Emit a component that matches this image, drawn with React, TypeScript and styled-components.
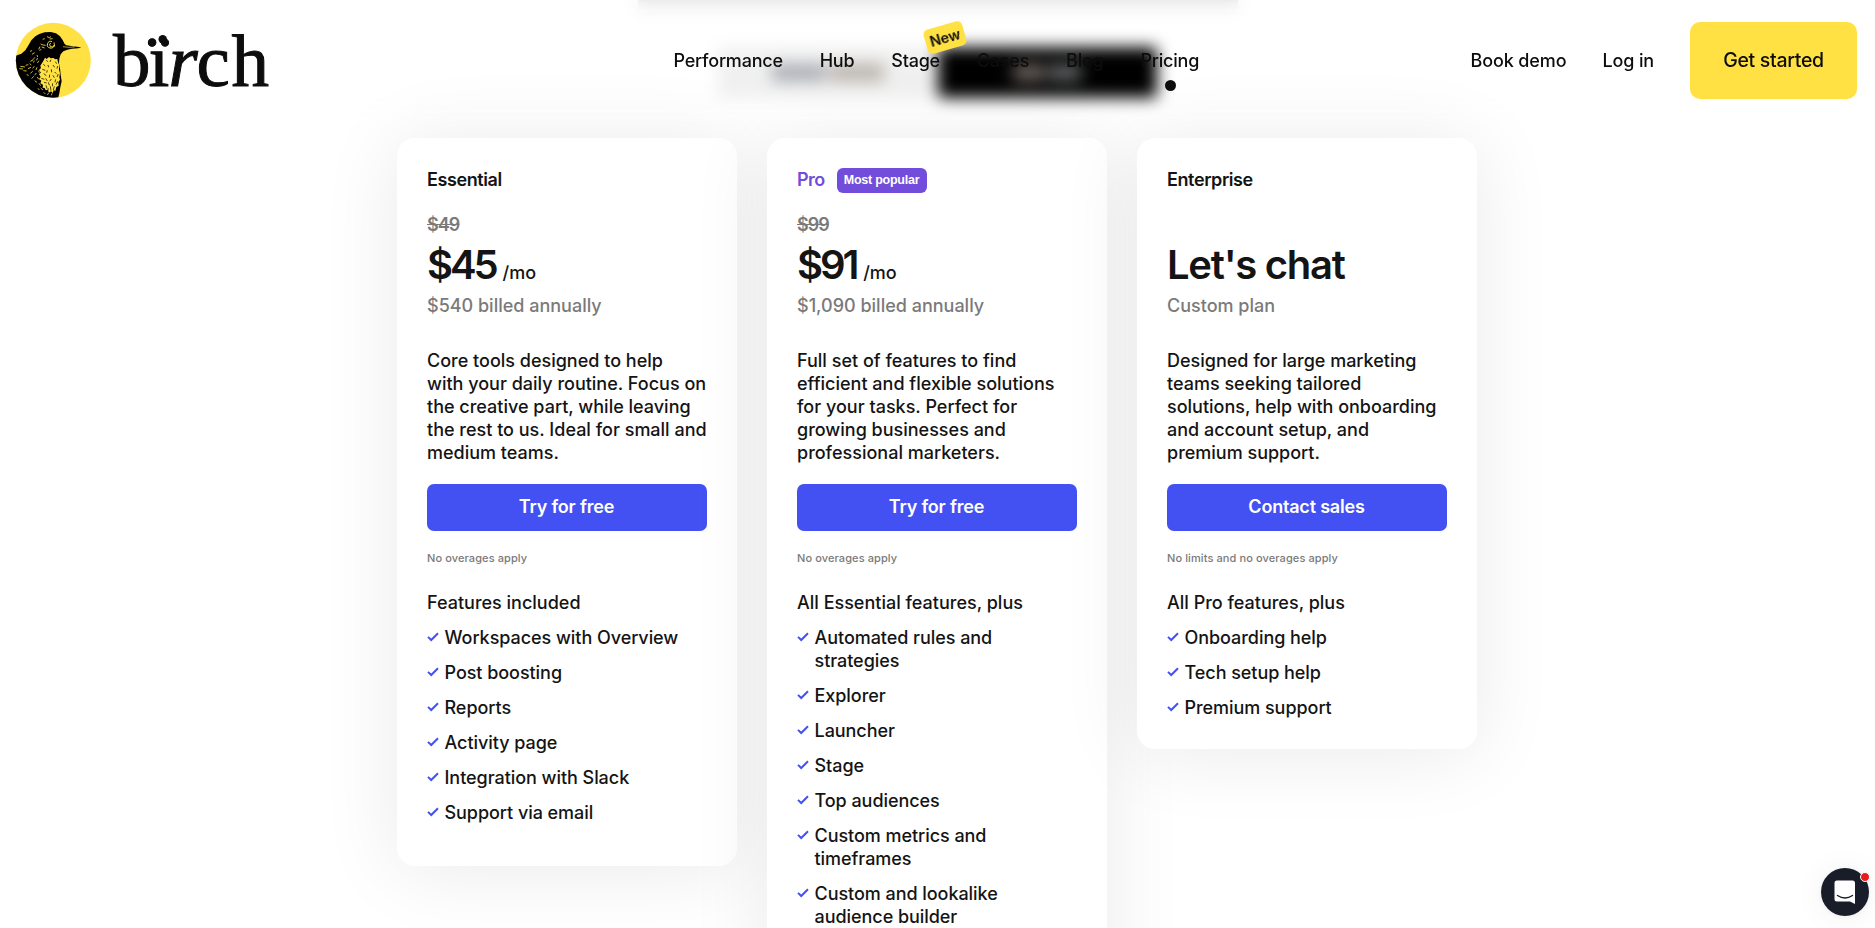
import React from 'react';
import styled, { createGlobalStyle } from 'styled-components';

const INK = '#141414';
const YELLOW = '#ffe144';
const BLUE = '#4451f2';
const PURPLE = '#724ddb';

const GlobalStyle = createGlobalStyle`
  * { box-sizing: border-box; }
  html, body { margin: 0; padding: 0; }
  body {
    height: 928px;
    overflow: hidden;
    background: #fff;
    color: ${INK};
    font: 500 18px/23px Inter, 'Liberation Sans', sans-serif;
  }
  ul { margin: 0; padding: 0; list-style: none; }
  h2, h3, p { margin: 0; font: inherit; }
  a { color: inherit; text-decoration: none; }
  button { border: 0; font: inherit; cursor: pointer; }
`;

/* Header */

const Header = styled.header`
  position: fixed;
  inset: 0 0 auto;
  z-index: 10;
  height: 121px;
  padding: 0 18px 0 16px;
  display: grid;
  grid-template-columns: 657.5px 1fr auto;
  align-items: center;
  color: #0d0d0d;
  backdrop-filter: blur(8px);
`;

const LogoLink = styled.a`
  display: block;
  height: 121px;
`;

const Nav = styled.nav`
  display: flex;
  align-items: center;
  gap: 36.9px;
  letter-spacing: -0.22px;
`;

const NavItem = styled.a<{ $active?: boolean }>`
  position: relative;
  ${({ $active }) =>
    $active &&
    `&::after {
      content: '';
      position: absolute;
      top: 31px;
      left: 50%;
      width: 11px;
      height: 11px;
      margin-left: -5px;
      border-radius: 50%;
      background: #0d0d0d;
    }`}
`;

const NewBadge = styled.span`
  position: absolute;
  left: 34px;
  top: -24px;
  width: 40px;
  height: 25px;
  border-radius: 5px;
  background: ${YELLOW};
  font-size: 14.5px;
  font-weight: 600;
  line-height: 25px;
  text-align: center;
  transform: rotate(-16deg);
`;

const Account = styled.div`
  display: flex;
  align-items: center;
  gap: 36px;
  letter-spacing: -0.13px;
`;

const GetStarted = styled.button`
  width: 167px;
  height: 77px;
  padding: 0 0 1px;
  border-radius: 10px;
  background: ${YELLOW};
  color: #0d0d0d;
  font-size: 19.5px;
  letter-spacing: -0.3px;
`;

/* Billing period switch, scrolled under the header */

const Intro = styled.section`
  height: 138px;
  display: flex;
  flex-direction: column;
  align-items: center;
`;

const IntroLine = styled.div`
  width: 600px;
  height: 14px;
  margin-bottom: 33px;
  background: linear-gradient(#e6e6e6, #fff);
`;

const Switch = styled.div`
  display: flex;
  width: 439px;
  height: 51px;
  background: #f0f0f0;
`;

const SwitchOption = styled.div<{ $selected?: boolean }>`
  flex: 1;
  display: flex;
  align-items: center;
  justify-content: center;
  gap: 4px;
  border-radius: 4px;
  background: ${({ $selected }) => ($selected ? '#000' : 'transparent')};
`;

const SwitchBar = styled.i<{ $w: number; $c: string }>`
  width: ${({ $w }) => $w}px;
  height: 17px;
  background: ${({ $c }) => $c};
`;

/* Plans */

const Plans = styled.main`
  display: flex;
  align-items: flex-start;
  gap: 30px;
  width: 1080px;
  margin-left: 397px;
`;

const Card = styled.article<{ $minHeight?: number }>`
  width: 340px;
  min-height: ${({ $minHeight }) => $minHeight ?? 0}px;
  padding: 30px;
  border-radius: 18px;
  background: #fff;
  box-shadow: 0 4px 80px rgba(0, 0, 0, 0.085);
`;

const CardHead = styled.div`
  display: flex;
  align-items: center;
  gap: 12px;
  height: 25px;
`;

const PlanName = styled.h2<{ $accent?: boolean }>`
  padding-bottom: 2px;
  font-weight: 600;
  letter-spacing: ${({ $accent }) => ($accent ? -0.6 : -0.4)}px;
  color: ${({ $accent }) => ($accent ? PURPLE : INK)};
`;

const Popular = styled.span`
  width: 90px;
  height: 25px;
  border-radius: 6px;
  background: ${PURPLE};
  color: #fff;
  font: 700 12.5px/24px 'Liberation Sans', Arial, sans-serif;
  letter-spacing: -0.25px;
  text-align: center;
`;

const OldPrice = styled.p`
  height: 23px;
  margin-top: 20px;
  color: #7a7a7a;
  font-weight: 600;
  letter-spacing: -0.95px;
  text-decoration: line-through;
`;

const Price = styled.p`
  display: flex;
  align-items: baseline;
  height: 48px;
  margin-top: 5px;
  line-height: 48px;
`;

const Amount = styled.span<{ $tight?: boolean }>`
  font-size: 40px;
  font-weight: 600;
  letter-spacing: ${({ $tight }) => ($tight ? -3.1 : -1.25)}px;
`;

const Period = styled.span`
  margin-left: 7px;
`;

const Billing = styled.p`
  margin-top: 5px;
  color: #7a7a7a;
`;

const Description = styled.p`
  height: 115px;
  margin-top: 32px;
  white-space: pre-line;
`;

const Cta = styled.button`
  display: block;
  width: 280px;
  height: 47px;
  margin-top: 20px;
  padding: 0 1px 2px 0;
  border-radius: 7px;
  background: ${BLUE};
  color: #fff;
  font-weight: 600;
  letter-spacing: -0.2px;
`;

const Note = styled.p`
  margin-top: 19px;
  color: #7a7a7a;
  font-size: 11px;
  line-height: 16px;
  letter-spacing: 0.1px;
`;

const FeatureTitle = styled.h3`
  margin-top: 25px;
`;

const Features = styled.ul`
  display: grid;
  gap: 12px;
  margin-top: 12px;
`;

const Feature = styled.li`
  display: grid;
  grid-template-columns: 12px 1fr;
  column-gap: 5.5px;
  letter-spacing: -0.05px;
  white-space: pre-line;
`;

const CheckMark = styled.svg`
  display: block;
  margin-top: 5px;
`;

const Check = () => (
  <CheckMark width="12" height="12" viewBox="0 0 12 12" fill="none">
    <path d="M1 5.900 4.200 9 11 2.300" stroke={BLUE} strokeWidth="2" />
  </CheckMark>
);

/* Chat launcher */

const Chat = styled.button`
  position: fixed;
  right: 6px;
  bottom: 12px;
  z-index: 20;
  display: grid;
  place-items: center;
  width: 48px;
  height: 48px;
  padding: 0;
  border-radius: 50%;
  background: #181d29;
  box-shadow: 0 1px 6px rgba(0, 0, 0, 0.06), 0 2px 32px rgba(0, 0, 0, 0.06);
`;

const UnreadDot = styled.span`
  position: absolute;
  top: 4px;
  right: -1px;
  width: 10px;
  height: 10px;
  border: 1px solid #fff;
  border-radius: 50%;
  background: #e81c1c;
`;

const LogoArt = styled.svg`
  display: block;
  overflow: visible;
`;

const Logo = () => (
  <LogoArt width="260" height="121" viewBox="16 0 260 121" role="img" aria-label="bïrch">
    <defs>
      <clipPath id="badge">
        <circle cx="130" cy="133" r="112.5" />
      </clipPath>
    </defs>
    <g transform="translate(10 16) scale(.3333)" clipPath="url(#badge)">
      <rect x="10" y="15" width="240" height="240" fill={YELLOW} />
      <path
        fill="#000"
        d="M10 122 L34 113 46 103 54 90 64 73 76 61 88 54 104 49 122 48 138 52 150 61 158 72 164 84 169 88 188 91 214 94 205 97 186 98 172 101 160 106 152 115 148 128 147 142 150 156 152 176 155 196 151 214 148 232 143 252 60 252 10 190Z"
      />
      <g fill="none" stroke={YELLOW}>
        <path d="M126 77a10 10 0 1 0 6 11l-4 5-7-1-2-7 3-4" strokeWidth="3" />
        <path d="M111 62l7 3 5-3M119 69l9-1M104 68l-6 2M92 84l7 3 8 1M90 92l-4 8M95 93l9 3M88 103l6-3M132 79l2 13" strokeWidth="2.5" />
        <path d="M159 92l17 2 18-1" strokeWidth="2" />
        <path
          strokeWidth="2.4"
          d="M60 106l6-2M66 115l8-5M81 117l2 6M75 124l-9 10M61 136l7-3M31 151l14 2M28 158l11 1M47 148l8-2M59 143l5 4M69 139l5-4M79 133l4-7M82 141l5-7M63 154l-9 4M73 151l-5 6M50 165l-10-1M81 154l-3 8M68 166l-7 6M79 171l-5 7M56 178l-6-2M86 164l2 6M71 181l-6 7M82 183l4 7M74 194l7 5M87 202l5 7M92 216l7 6M84 217l4 5M101 229l5 5M111 236l6-4M124 238l2-6"
        />
      </g>
      <path
        fill={YELLOW}
        d="M100 135l5-10 5 4 7-6 5 4 9-1 4 4 7-1 2 10 4 9-1 13 3 11-2 11 2 8-5 8 1 10-7 4-3 12-5-3-3 9-5-5-6 4-4-9-6 2-3-7-6-1 1-9-8-4 3-8-7-5 5-6-5-9 6-4-6-8 6-6-2-7z"
      />
      <path
        fill="none"
        stroke="#000"
        strokeWidth="2.2"
        d="M109 132l4 5M123 131l-3 7M136 137l4 6M100 145l6 5M114 147l2 7M129 147l5 7M143 150l-2 8M97 160l9 3M112 163l-2 7M124 160l1 9M134 168l5 5M101 173l8 6M119 176l-1 9M129 178l4 7M145 174l-4 9M94 187l9 3M107 187l5 8M124 189l-5 7M137 190l-2 9M102 199l8 2M115 199l3 9M128 202l-1 9M143 196l-5 10M108 208l3 10M121 211l2 13M133 211l-3 11M115 217l-2 9"
      />
    </g>
    <g fill="#0d0d0d">
      <text
        x="113 148.5"
        y="85.5"
        fontFamily="'Liberation Serif', 'Times New Roman', serif"
        fontSize="75"
        stroke="#0d0d0d"
        strokeWidth="1"
      >
        bï
        <tspan x="168.5" fontStyle="italic">r</tspan>
        <tspan x="196.5 231.5">ch</tspan>
      </text>
      <circle cx="152.2" cy="42.4" r="4.2" />
      <circle cx="162.7" cy="39.2" r="4.2" />
    </g>
  </LogoArt>
);

interface Plan {
  name: string;
  popular?: boolean;
  old?: string;
  price: string;
  period?: string;
  billing: string;
  text: string;
  cta: string;
  note: string;
  title: string;
  features: string[];
  minHeight?: number;
}

const plans: Plan[] = [
  {
    name: 'Essential',
    old: '$49',
    price: '$45',
    period: '/mo',
    billing: '$540 billed annually',
    text: 'Core tools designed to help\nwith your daily routine. Focus on\nthe creative part, while leaving\nthe rest to us. Ideal for small and\nmedium teams.',
    cta: 'Try for free',
    note: 'No overages apply',
    title: 'Features included',
    features: [
      'Workspaces with Overview',
      'Post boosting',
      'Reports',
      'Activity page',
      'Integration with Slack',
      'Support via email',
    ],
    minHeight: 728,
  },
  {
    name: 'Pro',
    popular: true,
    old: '$99',
    price: '$91',
    period: '/mo',
    billing: '$1,090 billed annually',
    text: 'Full set of features to find\nefficient and flexible solutions\nfor your tasks. Perfect for\ngrowing businesses and\nprofessional marketers.',
    cta: 'Try for free',
    note: 'No overages apply',
    title: 'All Essential features, plus',
    features: [
      'Automated rules and\nstrategies',
      'Explorer',
      'Launcher',
      'Stage',
      'Top audiences',
      'Custom metrics and\ntimeframes',
      'Custom and lookalike\naudience builder',
    ],
    minHeight: 900,
  },
  {
    name: 'Enterprise',
    price: "Let's chat",
    billing: 'Custom plan',
    text: 'Designed for large marketing\nteams seeking tailored\nsolutions, help with onboarding\nand account setup, and\npremium support.',
    cta: 'Contact sales',
    note: 'No limits and no overages apply',
    title: 'All Pro features, plus',
    features: ['Onboarding help', 'Tech setup help', 'Premium support'],
    minHeight: 611,
  },
];

const PlanCard = ({ plan }: { plan: Plan }) => (
  <Card $minHeight={plan.minHeight}>
    <CardHead>
      <PlanName $accent={plan.popular}>{plan.name}</PlanName>
      {plan.popular && <Popular>Most popular</Popular>}
    </CardHead>
    <OldPrice>{plan.old}</OldPrice>
    <Price>
      <Amount $tight={!!plan.period}>{plan.price}</Amount>
      {plan.period && <Period>{plan.period}</Period>}
    </Price>
    <Billing>{plan.billing}</Billing>
    <Description>{plan.text}</Description>
    <Cta>{plan.cta}</Cta>
    <Note>{plan.note}</Note>
    <FeatureTitle>{plan.title}</FeatureTitle>
    <Features>
      {plan.features.map((f) => (
        <Feature key={f}>
          <Check />
          {f}
        </Feature>
      ))}
    </Features>
  </Card>
);

export default function App() {
  return (
    <>
      <GlobalStyle />
      <Header>
        <LogoLink href="#">
          <Logo />
        </LogoLink>
        <Nav>
          <NavItem>Performance</NavItem>
          <NavItem>Hub</NavItem>
          <NavItem>
            Stage
            <NewBadge>New</NewBadge>
          </NavItem>
          <NavItem>Cases</NavItem>
          <NavItem>Blog</NavItem>
          <NavItem $active>Pricing</NavItem>
        </Nav>
        <Account>
          <a>Book demo</a>
          <a>Log in</a>
          <GetStarted>Get started</GetStarted>
        </Account>
      </Header>
      <Intro>
        <IntroLine />
        <Switch>
          <SwitchOption>
            <SwitchBar $w={54} $c="#a9acb4" />
            <SwitchBar $w={54} $c="#b9b2aa" />
          </SwitchOption>
          <SwitchOption $selected>
            <SwitchBar $w={32} $c="#6e6460" />
            <SwitchBar $w={32} $c="#626666" />
          </SwitchOption>
        </Switch>
      </Intro>
      <Plans>
        {plans.map((p) => (
          <PlanCard key={p.name} plan={p} />
        ))}
      </Plans>
      <Chat aria-label="Open chat">
        <svg width="24" height="26" viewBox="0 0 24 26">
          <path d="M4 1.5h15.500a2.500 2.500 0 0 1 2.500 2.500v21l-5-2.500H4A2.500 2.500 0 0 1 1.500 20V4A2.500 2.500 0 0 1 4 1.500z" fill="#fff" />
          <path d="M4.500 16.500q7.500 5 15 0" fill="none" stroke="#181d29" strokeWidth="1.400" strokeLinecap="round" />
        </svg>
        <UnreadDot />
      </Chat>
    </>
  );
}
